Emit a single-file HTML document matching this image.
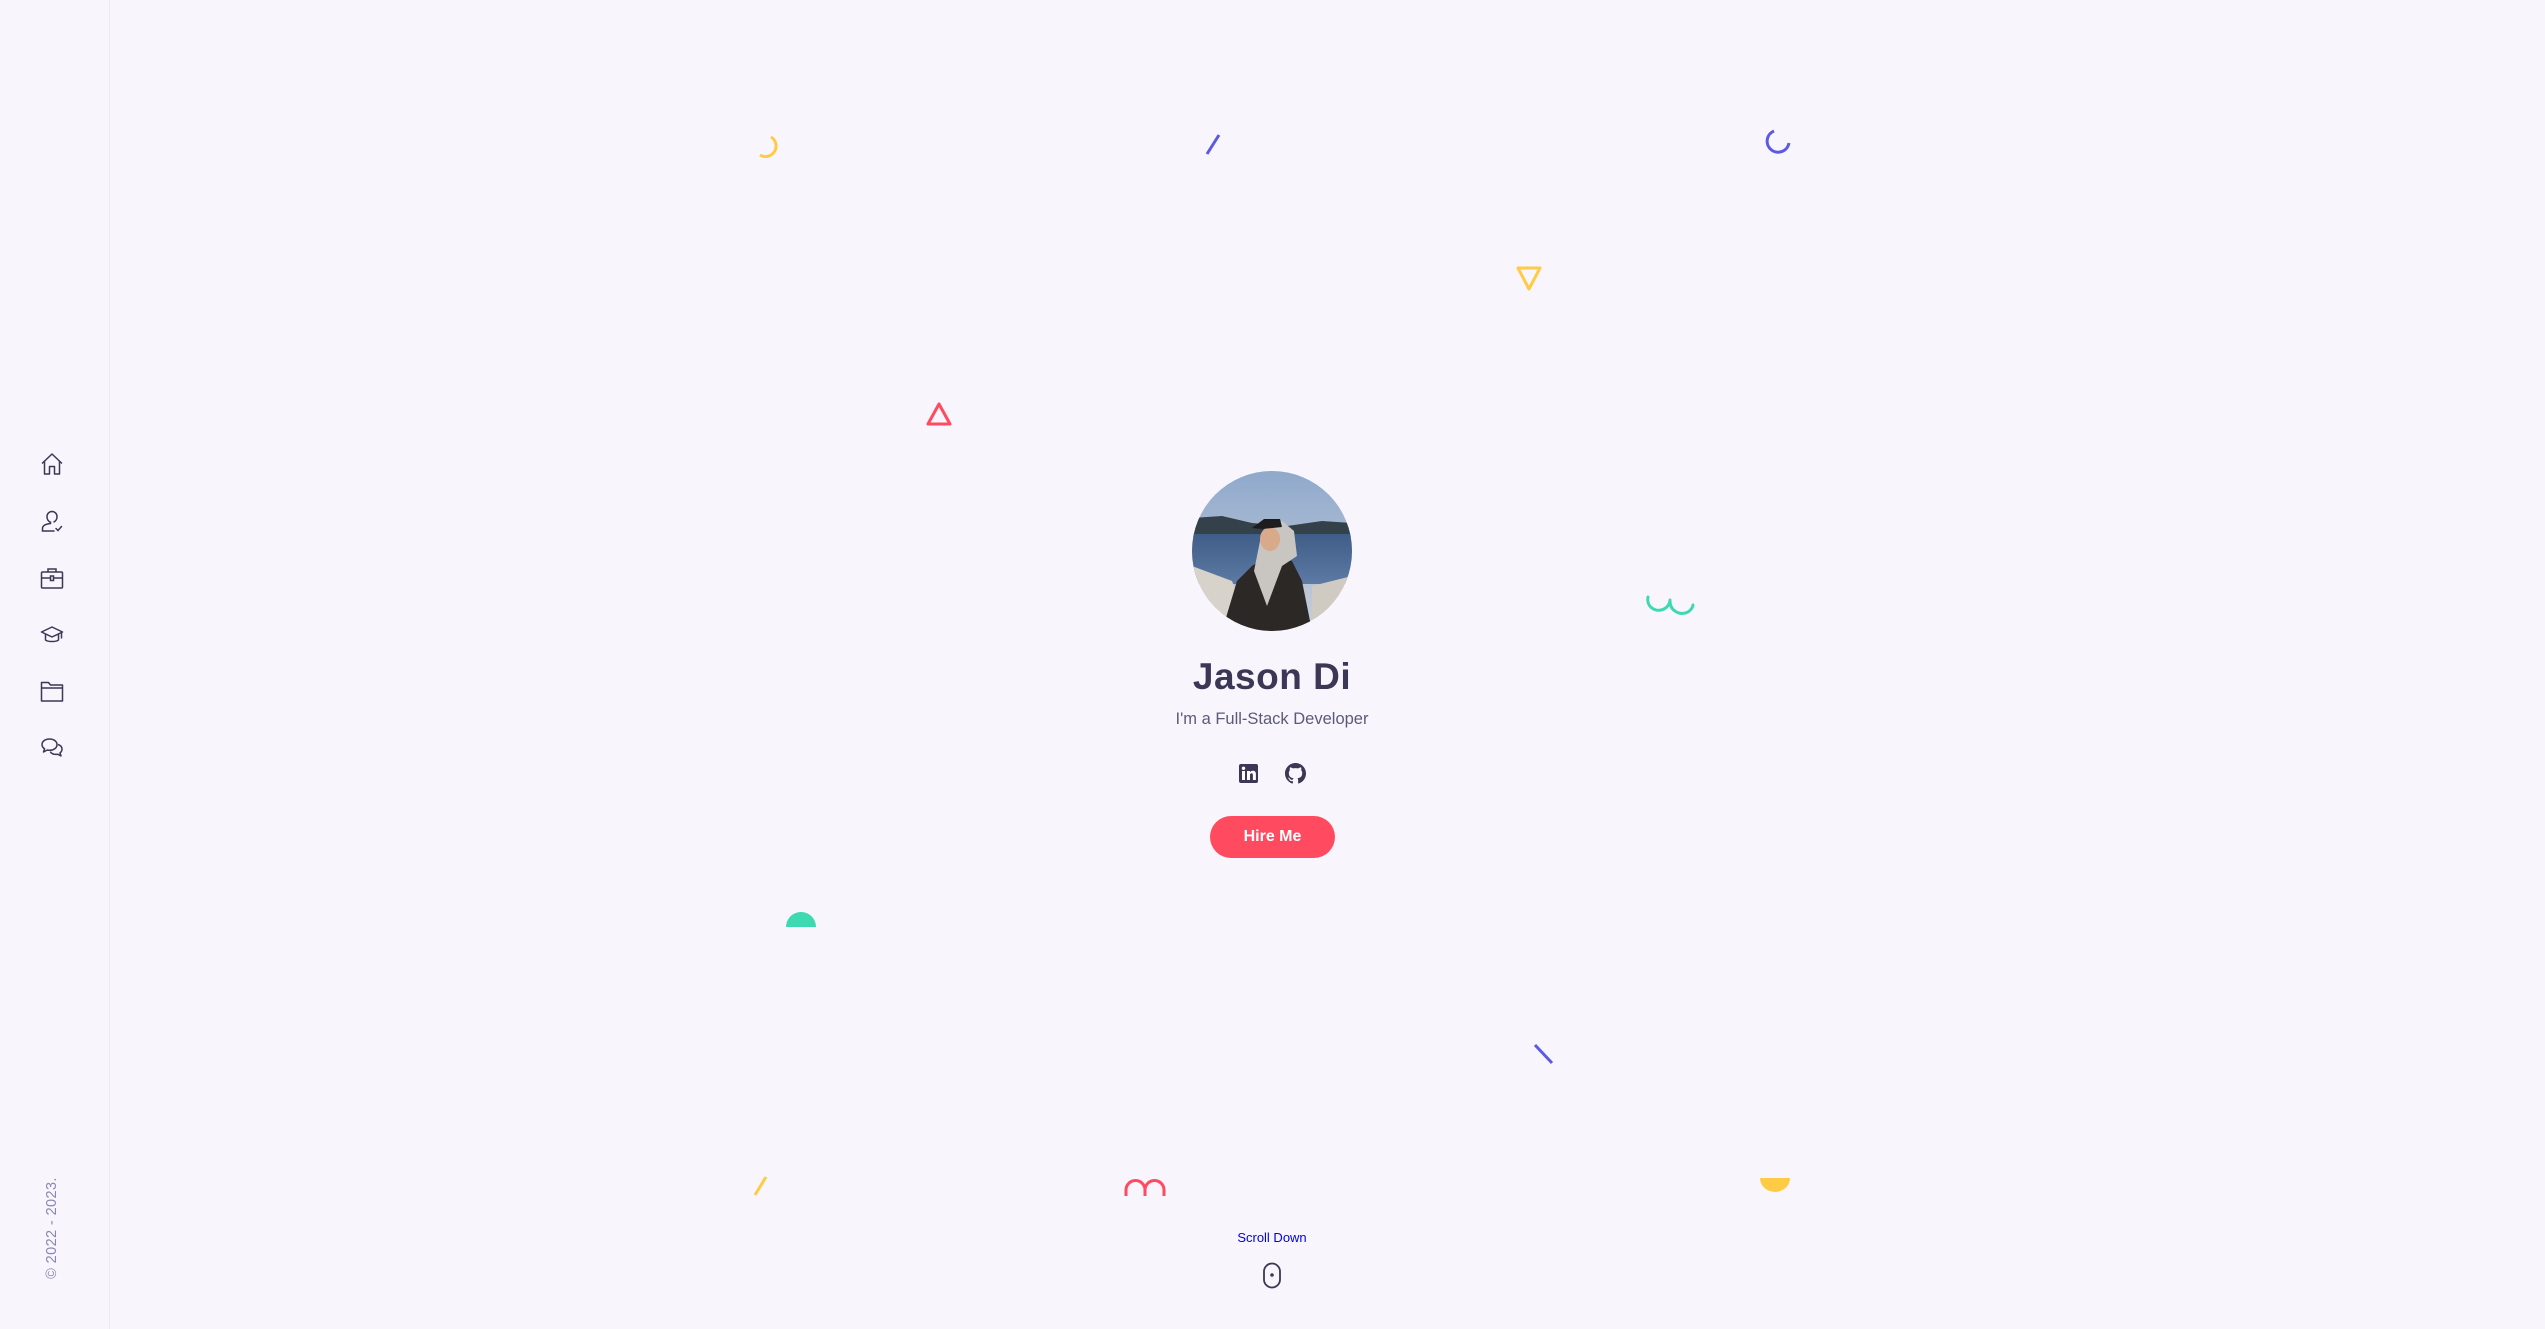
<!DOCTYPE html>
<html><head><meta charset="utf-8"><style>
html,body{margin:0;padding:0;width:2545px;height:1329px;background:#f8f6fc;overflow:hidden;font-family:"Liberation Sans",sans-serif}
.side{position:absolute;left:0;top:0;width:109px;height:1329px;border-right:1.5px solid #ece9f3;background:#f8f6fc}
.ic{position:absolute;left:40px;width:24px;height:24px}
.copy{position:absolute;left:52px;top:1228px;transform:translate(-50%,-50%) rotate(-90deg);white-space:nowrap;font-size:14.5px;color:#8a87b0;letter-spacing:.4px}
svg.d{position:absolute;overflow:visible}
</style></head><body>
<div class="side">
<svg class="ic" style="top:452px" viewBox="0 0 24 24" fill="none" stroke="#3b3755" stroke-width="1.5" stroke-linejoin="round"><path d="M2 11.5 12 2l10 9.5M4.5 9.5V22h5v-7.5h5V22h5V9.5"/></svg>
<svg class="ic" style="top:509px" viewBox="0 0 24 24" fill="none" stroke="#3b3755" stroke-width="1.5" stroke-linecap="round"><path d="M12 2.5a5 5 0 0 0-5 5c0 3 1.6 5 3.5 5.7v1.3C6 15 2.5 16.5 2.5 19.5V22H14"/><path d="M12 2.5a5 5 0 0 1 5 5c0 2.5-1.2 4.5-3 5.4"/><path d="m16 19.5 2 2 3.5-4"/></svg>
<svg class="ic" style="top:566px" viewBox="0 0 24 24" fill="none" stroke="#3b3755" stroke-width="1.5"><rect x="1.5" y="6" width="21" height="16" rx="1"/><path d="M8 6V3h8v3M1.5 12h21"/><rect x="10.5" y="10" width="3" height="4.5" fill="#f8f6fc"/></svg>
<svg class="ic" style="top:623px" viewBox="0 0 24 24" fill="none" stroke="#3b3755" stroke-width="1.5" stroke-linejoin="round"><path d="M1.5 9 12 4l10.5 5L12 14z"/><path d="M5.5 11v6c2 2 11 2 13 0v-6M21.5 9.5v6"/></svg>
<svg class="ic" style="top:679px" viewBox="0 0 24 24" fill="none" stroke="#3b3755" stroke-width="1.5" stroke-linejoin="round"><path d="M1.5 3.5h7l2 2.5h12v16H1.5zM1.5 9h21"/></svg>
<svg class="ic" style="top:736px" viewBox="0 0 24 24" fill="none" stroke="#3b3755" stroke-width="1.5" stroke-linejoin="round"><path d="M9.5 3C5 3 2 5.5 2 8.5c0 1.8 1 3.3 2.6 4.3L3.5 16l3.8-2c.7.2 1.4.3 2.2.3 4.5 0 7.5-2.5 7.5-5.7S14 3 9.5 3z"/><path d="M18 8.5c2.5.8 4 2.6 4 4.7 0 1.5-.8 2.8-2 3.7l1 3-3.4-1.7c-.6.1-1.1.2-1.7.2-2.6 0-4.7-1.1-5.6-2.8"/></svg>
<div class="copy">© 2022 - 2023.</div>
</div>

<!-- decorations -->
<svg class="d" style="left:750px;top:130px" width="32" height="32" viewBox="0 0 32 32"><path d="M21 7a10 10 0 0 1-11 18" fill="none" stroke="#ffcb45" stroke-width="3"/></svg>
<svg class="d" style="left:1204px;top:132px" width="20" height="24"><path d="M3 22 15 3" stroke="#5b5ae0" stroke-width="3"/></svg>
<svg class="d" style="left:1760px;top:126px" width="34" height="34" viewBox="0 0 34 34"><path d="M14 5a11 11 0 1 0 15 12" fill="none" stroke="#5b5ae0" stroke-width="3"/></svg>
<svg class="d" style="left:1515px;top:264px" width="28" height="28"><path d="M3 4h22L14 25z" fill="none" stroke="#ffcb45" stroke-width="3" stroke-linejoin="round"/></svg>
<svg class="d" style="left:925px;top:400px" width="28" height="28"><path d="M3 24h22L14 4z" fill="none" stroke="#ff4a5f" stroke-width="3" stroke-linejoin="round"/></svg>
<svg class="d" style="left:1640px;top:585px" width="60" height="40"><path d="M8 12c-2 10 8 16 16 12 4-2 6-6 6-9M30 16c0 10 10 15 18 11 3-2 5-5 5-7" fill="none" stroke="#3dd9b0" stroke-width="3" stroke-linecap="round"/></svg>
<svg class="d" style="left:785px;top:905px" width="32" height="24"><path d="M1 22a15 15 0 0 1 30 0z" fill="#3dd9b0"/></svg>
<svg class="d" style="left:1532px;top:1042px" width="24" height="24"><path d="M3 3l17 18" stroke="#5b5ae0" stroke-width="3"/></svg>
<svg class="d" style="left:752px;top:1174px" width="20" height="24"><path d="M3 21 14 3" stroke="#ffcb45" stroke-width="3"/></svg>
<svg class="d" style="left:1122px;top:1172px" width="50" height="28"><path d="M4 24V18a9.5 9.5 0 0 1 19 0V24M23 18a9.5 9.5 0 0 1 19 0V24" fill="none" stroke="#ff4a5f" stroke-width="3"/></svg>
<svg class="d" style="left:1758px;top:1176px" width="34" height="22"><path d="M2 2h30a15 14 0 0 1-30 0z" fill="#ffcb45"/></svg>

<!-- avatar -->
<svg class="d" style="left:1192px;top:471px" width="160" height="160" viewBox="0 0 160 160">
<defs><clipPath id="c"><circle cx="80" cy="80" r="80"/></clipPath>
<linearGradient id="sky" x1="0" y1="0" x2="0" y2="1"><stop offset="0" stop-color="#8fa9cc"/><stop offset="1" stop-color="#c9cfd8"/></linearGradient>
<linearGradient id="sea" x1="0" y1="0" x2="0" y2="1"><stop offset="0" stop-color="#3f5d87"/><stop offset="1" stop-color="#5c7aa3"/></linearGradient></defs>
<g clip-path="url(#c)">
<rect width="160" height="160" fill="url(#sky)"/>
<path d="M0 47 30 45 60 52 95 55 130 50 160 52V66H0z" fill="#34404a"/>
<rect y="63" width="160" height="50" fill="url(#sea)"/>
<path d="M0 95 40 110 60 160H0z" fill="#d7d3cb"/>
<path d="M120 115 160 105V160H120z" fill="#cfcac2"/>
<path d="M30 160 45 110 60 95 75 85 100 90 110 110 120 160z" fill="#2c2826"/>
<path d="M62 100 68 70 78 52 90 50 102 60 105 85 90 95 75 135z" fill="#c9c6c2"/>
<ellipse cx="78" cy="68" rx="10" ry="12" fill="#d8a98a"/>
<path d="M60 57 72 48 88 48 90 56 70 58z" fill="#1d1c1f"/>
</g></svg>

<div style="position:absolute;left:1072px;width:400px;top:656px;text-align:center;font-size:37px;font-weight:bold;color:#3b3755;letter-spacing:.5px">Jason Di</div>
<div style="position:absolute;left:1072px;width:400px;top:710px;text-align:center;font-size:16.5px;color:#5c5a78">I'm a Full-Stack Developer</div>

<svg class="d" style="left:1239px;top:764px" width="19" height="19" viewBox="0 0 19 19"><rect width="19" height="19" rx="2" fill="#3b3755"/><rect x="3" y="7" width="3" height="9" fill="#fff"/><circle cx="4.5" cy="4.3" r="1.7" fill="#fff"/><path d="M8 7h3v1.3c.6-1 1.7-1.5 2.9-1.5 2 0 3 1.2 3 3.6V16h-3v-5c0-1.2-.4-1.8-1.3-1.8-1 0-1.6.7-1.6 1.9V16H8z" fill="#fff"/></svg>
<svg class="d" style="left:1285px;top:763px" width="21" height="21" viewBox="0 0 16 16"><path fill="#3b3755" d="M8 0C3.58 0 0 3.580 0 8c0 3.54 2.29 6.53 5.47 7.59.4.07.55-.17.55-.38 0-.19-.01-.82-.01-1.49-2.010.37-2.530-.49-2.690-.94-.09-.23-.48-.94-.82-1.130-.28-.15-.68-.52-.01-.53.63-.01 1.080.58 1.230.82.72 1.210 1.870.87 2.330.66.07-.52.28-.87.51-1.070-1.780-.2-3.640-.89-3.640-3.950 0-.87.31-1.590.82-2.150-.08-.2-.36-1.020.08-2.120 0 0 .67-.21 2.200.82.64-.18 1.320-.27 2-.27.68 0 1.360.09 2 .27 1.530-1.040 2.200-.82 2.200-.82.44 1.100.16 1.920.08 2.120.51.56.82 1.270.82 2.150 0 3.070-1.870 3.750-3.650 3.950.29.25.54.73.54 1.480 0 1.070-.01 1.930-.01 2.200 0 .21.15.46.55.38A8.013 8.013 0 0016 8c0-4.420-3.580-8-8-8z"/></svg>

<div style="position:absolute;left:1210px;top:816px;width:125px;height:42px;border-radius:21px;background:#ff4a5f;color:#fff;font-weight:bold;font-size:16px;line-height:42px;text-align:center">Hire Me</div>

<div style="position:absolute;left:1172px;width:200px;top:1230px;text-align:center;font-size:13px;color:#0000ee">Scroll Down</div>
<svg class="d" style="left:1262px;top:1262px" width="20" height="27" viewBox="0 0 20 27"><rect x="2" y="1.5" width="16" height="24" rx="8" fill="none" stroke="#3b3755" stroke-width="1.8"/><circle cx="10" cy="13" r="1.8" fill="#3b3755"/></svg>
</body></html>
